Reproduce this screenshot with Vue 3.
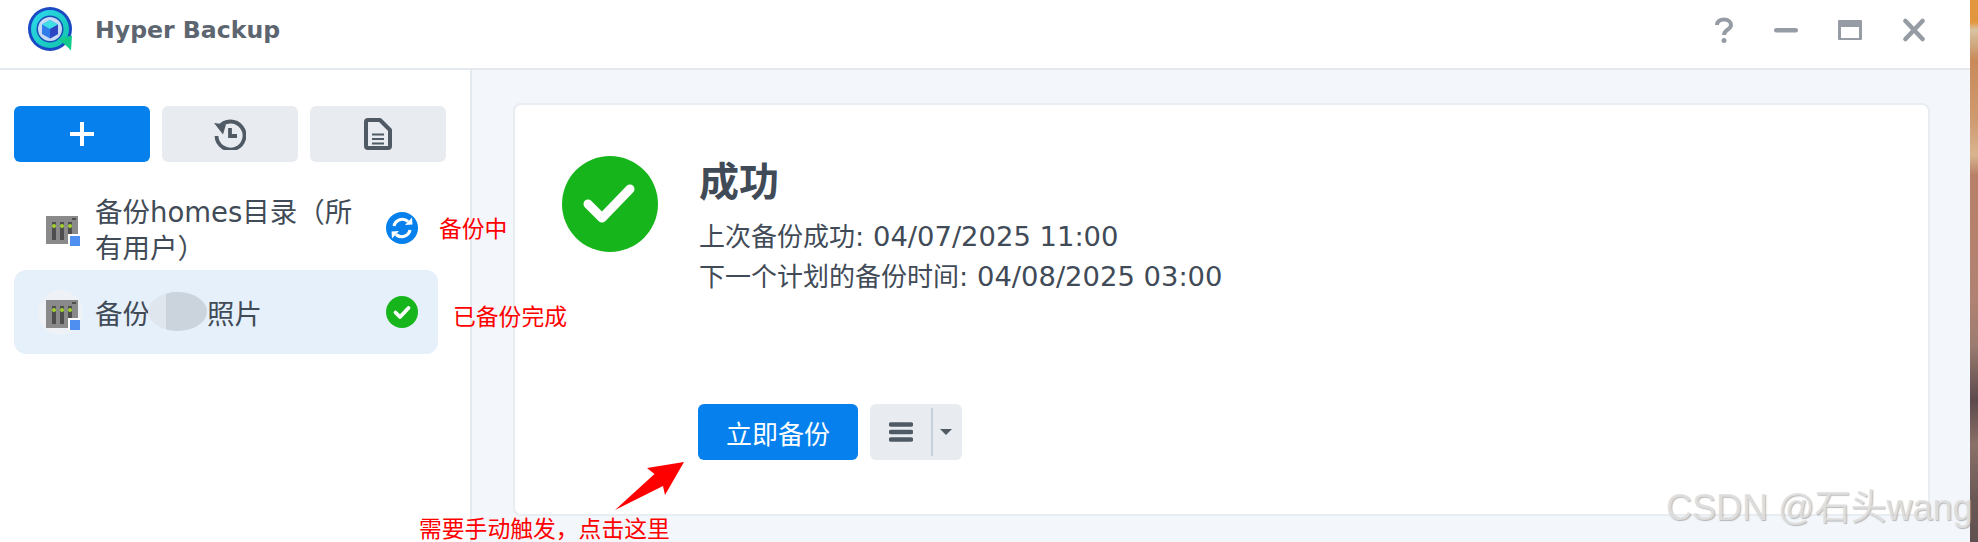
<template>
  <div class="page">
    <div class="window">
      <header class="titlebar">
        <svg class="logo" viewBox="0 0 46 46">
          <defs>
            <linearGradient id="ring" x1="0" y1="0" x2="1" y2="1">
              <stop offset="0" stop-color="#2fd8f0" />
              <stop offset="1" stop-color="#10c4a8" />
            </linearGradient>
          </defs>
          <circle cx="22" cy="22" r="22" fill="#1a49c4" />
          <circle cx="22" cy="22" r="19" fill="url(#ring)" />
          <circle cx="22" cy="22" r="13.500" fill="#1550b8" />
          <circle cx="22" cy="22" r="12" fill="#c6d9f6" />
          <path d="M22 13l8 4.500v9.500l-8 4.500-8-4.500v-9.500z" fill="#2f7cea" />
          <path d="M22 13l8 4.500-8 4.500-8-4.500z" fill="#40dfe6" />
          <path d="M22 22l8-4.500v9.500l-8 4.500z" fill="#2c45c2" />
          <path d="M30 32l14-3.500-1 15-4.500-4.500z" fill="#14c98c" />
        </svg>
        <span class="app-name">Hyper Backup</span>
        <div class="win-ctrls">
          <svg viewBox="0 0 20 26" class="ctl ctl-help"><path d="M3 8c0-3.500 3-5.500 7-5.500s7 2.200 7 5.500c0 4.800-7 4.600-7 10" fill="none" stroke="#969ca4" stroke-width="4" /><circle cx="10" cy="23.500" r="2.500" fill="#969ca4" /></svg>
          <svg viewBox="0 0 24 24" class="ctl"><rect x="0" y="10" width="24" height="4.500" rx="2.200" fill="#969ca4" /></svg>
          <svg viewBox="0 0 24 24" class="ctl"><path fill-rule="evenodd" d="M1 2h22a1 1 0 0 1 1 1v18a1 1 0 0 1-1 1H1a1 1 0 0 1-1-1V3a1 1 0 0 1 1-1zm2 7v11h18V9z" fill="#969ca4" /></svg>
          <svg viewBox="0 0 24 24" class="ctl"><path d="M3.500 3l17 18M20.500 3l-17 18" stroke="#969ca4" stroke-width="4.500" stroke-linecap="round" fill="none" /></svg>
        </div>
      </header>

      <div class="body">
        <aside class="sidebar">
          <div class="toolbar">
            <button class="tool tool-add">
              <svg viewBox="0 0 24 24" width="24" height="24"><path d="M12 0v24M0 12h24" stroke="#fff" stroke-width="4" /></svg>
            </button>
            <button class="tool">
              <svg viewBox="0 0 32 32" width="32" height="32">
                <path d="M5 9.500A14 14 0 1 1 2.500 18" fill="none" stroke="#4f5a65" stroke-width="3.800" />
                <path d="M0 5l12 1.500-3 10z" fill="#4f5a65" />
                <path d="M16 10v8h7" fill="none" stroke="#4f5a65" stroke-width="3.800" />
              </svg>
            </button>
            <button class="tool">
              <svg viewBox="0 0 28 32" width="28" height="32">
                <path d="M4 2h12l10 10v16a2 2 0 0 1-2 2H4a2 2 0 0 1-2-2V4a2 2 0 0 1 2-2z" fill="none" stroke="#4f5a65" stroke-width="4" stroke-linejoin="round" />
                <path d="M8 16.500h12M8 21h12M8 25.500h12" stroke="#4f5a65" stroke-width="2" />
              </svg>
            </button>
          </div>

          <div v-for="(t, i) in tasks" :key="i" class="task" :class="{ active: t.active }">
            <span v-if="t.active" class="icon-halo"></span>
            <svg class="task-icon" viewBox="0 0 34 30">
              <rect width="32" height="28" fill="#8a8a8a" />
              <rect x="6" y="6" width="4" height="18" fill="#4e4e4e" />
              <rect x="14" y="6" width="4" height="18" fill="#4e4e4e" />
              <rect x="22" y="6" width="4" height="18" fill="#4e4e4e" />
              <circle cx="8" cy="10" r="2" fill="#a4d22e" />
              <circle cx="16" cy="10" r="2" fill="#a4d22e" />
              <circle cx="24" cy="10" r="2" fill="#a4d22e" />
              <rect x="26" y="2" width="4" height="2" fill="#4e4e4e" />
              <rect x="22" y="18" width="12" height="12" fill="#fff" />
              <rect x="24" y="20" width="10" height="10" fill="#4f8ff0" />
            </svg>
            <div class="task-name">
              <template v-if="t.active">备份<span class="blob"><i></i></span>照片</template>
              <template v-else>{{ t.name }}</template>
            </div>
            <svg v-if="t.state === 'running'" class="status" viewBox="0 0 32 32">
              <circle cx="16" cy="16" r="16" fill="#0580ec" />
              <path d="M8 14a8.500 8.500 0 0 1 14-4.500" fill="none" stroke="#fff" stroke-width="3.200" />
              <path d="M19 13l7.500-.5-.5-7z" fill="#fff" />
              <path d="M24 18a8.500 8.500 0 0 1-14 4.500" fill="none" stroke="#fff" stroke-width="3.200" />
              <path d="M13 19l-7.500.5.500 7z" fill="#fff" />
            </svg>
            <svg v-else class="status" viewBox="0 0 32 32">
              <circle cx="16" cy="16" r="16" fill="#17b51c" />
              <path d="M9.500 16.500l4.500 4.500 8.500-9" fill="none" stroke="#fff" stroke-width="3.800" stroke-linecap="round" stroke-linejoin="round" />
            </svg>
          </div>
        </aside>

        <main class="main">
          <section class="card">
            <div class="summary">
              <svg class="big-check" viewBox="0 0 96 96">
                <circle cx="48" cy="48" r="48" fill="#17b51c" />
                <path d="M26 48l14 14 28-29" fill="none" stroke="#fff" stroke-width="9" stroke-linecap="round" stroke-linejoin="round" />
              </svg>
              <div class="summary-text">
                <h1>成功</h1>
                <p>上次备份成功<span class="dt">: 04/07/2025 11:00</span></p>
                <p>下一个计划的备份时间<span class="dt">: 04/08/2025 03:00</span></p>
              </div>
            </div>
            <div class="actions">
              <button class="primary">立即备份</button>
              <div class="menu-btn">
                <svg viewBox="0 0 24 20" width="24" height="20">
                  <path d="M2 2.500h20M2 10h20M2 17.500h20" stroke="#4f5a65" stroke-width="4.400" stroke-linecap="round" />
                </svg>
                <span class="menu-sep"></span>
                <span class="caret"></span>
              </div>
            </div>
          </section>
        </main>
      </div>
    </div>
    <div class="backdrop"></div>

    <!-- 标注 -->
    <span class="note note-running">备份中</span>
    <span class="note note-done">已备份完成</span>
    <span class="note note-manual">需要手动触发，点击这里</span>
    <svg class="arrow" viewBox="0 0 80 60" width="80" height="60">
      <path d="M0 50L39.500 14 32 8 69 2 50 35 48 26z" fill="#f00" />
    </svg>
    <span class="watermark">CSDN @石头wang</span>
  </div>
</template>

<script setup>
const tasks = [
  { name: '备份homes目录（所有用户）', state: 'running', active: false },
  { name: '备份照片', state: 'done', active: true }
]
</script>

<style scoped>
.page {
  position: relative;
  display: flex;
  width: 1978px;
  height: 542px;
  overflow: hidden;
  font-family: "DejaVu Sans", "Noto Sans CJK SC", sans-serif;
  color: #414b57;
}

.window {
  display: flex;
  flex-direction: column;
  width: 1970px;
  flex: none;
  background: #f3f6fa;
}

.backdrop {
  flex: 1;
  background: linear-gradient(180deg, #e2973f 0, #e2973f 22px, #d8c4a2 30px, #c98a5a 60px, #cf9a70 120px, #d8b58f 155px, #b98068 175px, #b08272 300px, #9c7c70 345px, #5d4a4c 400px, #8a7068 445px, #6a5855 500px, #5f5050 542px);
}

/* ── Title bar ── */
.titlebar {
  display: flex;
  align-items: center;
  height: 60px;
  padding-bottom: 8px;
  flex: none;
  background: #fff;
  border-bottom: 2px solid #e4e9f0;
}

.logo {
  width: 46px;
  height: 46px;
  margin-left: 28px;
}

.app-name {
  margin-left: 21px;
  font-size: 23.600px;
  font-weight: 700;
  color: #5d6670;
}

.win-ctrls {
  display: flex;
  align-items: center;
  margin-left: auto;
  margin-right: 44px;
  gap: 40px;
}

.ctl {
  width: 24px;
  height: 24px;
}

.ctl-help {
  width: 20px;
  height: 26px;
}

/* ── Sidebar ── */
.body {
  display: flex;
  flex: 1;
  min-height: 0;
}

.sidebar {
  box-sizing: border-box;
  width: 472px;
  flex: none;
  padding: 36px 24px 0 14px;
  background: #fff;
  border-right: 2px solid #e4e9f0;
}

.toolbar {
  display: flex;
  gap: 12px;
  margin-bottom: 24px;
}

.tool {
  display: flex;
  align-items: center;
  justify-content: center;
  flex: none;
  width: 136px;
  height: 56px;
  padding: 0;
  border: none;
  border-radius: 6px;
  background: #e8ecf1;
}

.tool-add {
  background: #0580ec;
}

.task {
  position: relative;
  display: flex;
  align-items: center;
  height: 84px;
  margin-right: 8px;
  padding: 0 20px 0 32px;
  border-radius: 12px;
}

.task.active {
  background: #e6f0fa;
}

.icon-halo {
  position: absolute;
  left: 24px;
  top: 20px;
  width: 45px;
  height: 45px;
  border-radius: 50%;
  background: #eef2f6;
}

.task-icon {
  position: relative;
  width: 34px;
  height: 30px;
  margin-top: 6px;
  flex: none;
}

.task-name {
  flex: 1;
  margin: 4px 12px 0 15px;
  font-size: 27.500px;
  line-height: 36px;
}

.blob {
  display: inline-block;
  position: relative;
  width: 57px;
  height: 24px;
}

.blob i {
  position: absolute;
  left: -2px;
  top: -8px;
  width: 59px;
  height: 39px;
  border-radius: 50%;
  background: linear-gradient(90deg, #dfe6ed 0 30%, #cbd4dc 30%);
}

.status {
  width: 32px;
  height: 32px;
  flex: none;
}

/* ── Main card ── */
.main {
  flex: 1;
  padding: 33px 40px 26px 41px;
  min-width: 0;
}

.card {
  box-sizing: border-box;
  height: 100%;
  padding: 51px 48px 0 47px;
  background: #fff;
  border: 2px solid #e8edf2;
  border-radius: 8px;
}

.summary {
  display: flex;
  align-items: flex-start;
  gap: 41px;
}

.big-check {
  width: 96px;
  height: 96px;
  flex: none;
}

.summary-text {
  margin-top: 2px;
}

.summary-text h1 {
  margin: 0 0 11px;
  font-size: 40px;
  line-height: 48px;
  font-weight: 700;
}

.summary-text p {
  margin: 0;
  font-size: 26px;
  line-height: 40px;
}

.dt {
  font-size: 27.400px;
}

.actions {
  display: flex;
  align-items: center;
  gap: 12px;
  margin: 107px 0 0 136px;
}

.primary {
  width: 160px;
  height: 56px;
  padding: 0;
  border: none;
  border-radius: 6px;
  background: #0580ec;
  color: #fff;
  font-family: inherit;
  font-size: 26px;
}

.menu-btn {
  display: flex;
  align-items: center;
  width: 92px;
  height: 56px;
  padding-left: 19px;
  box-sizing: border-box;
  border-radius: 6px;
  background: #e8ecf1;
}

.menu-sep {
  width: 2px;
  height: 48px;
  margin-left: 18px;
  background: #c8d0d9;
}

.caret {
  margin-left: 7px;
  border-left: 6px solid transparent;
  border-right: 6px solid transparent;
  border-top: 6px solid #4f5a65;
}

/* ── Annotations over the screenshot ── */
.note {
  position: absolute;
  color: #f00;
  font-family: "Noto Sans CJK SC", sans-serif;
  font-size: 22.800px;
  line-height: 28px;
  white-space: nowrap;
}

.note-running { left: 439px; top: 214px; }
.note-done    { left: 453px; top: 302px; }
.note-manual  { left: 419px; top: 514px; }

.arrow {
  position: absolute;
  left: 615px;
  top: 460px;
}

.watermark {
  position: absolute;
  left: 1666px;
  top: 486px;
  font-family: "Liberation Sans", "Noto Sans CJK SC", sans-serif;
  font-size: 36px;
  line-height: 44px;
  white-space: nowrap;
  color: rgba(225, 225, 225, 0.9);
  text-shadow: 1px 1px 1px rgba(120, 120, 120, 0.5);
}
</style>
